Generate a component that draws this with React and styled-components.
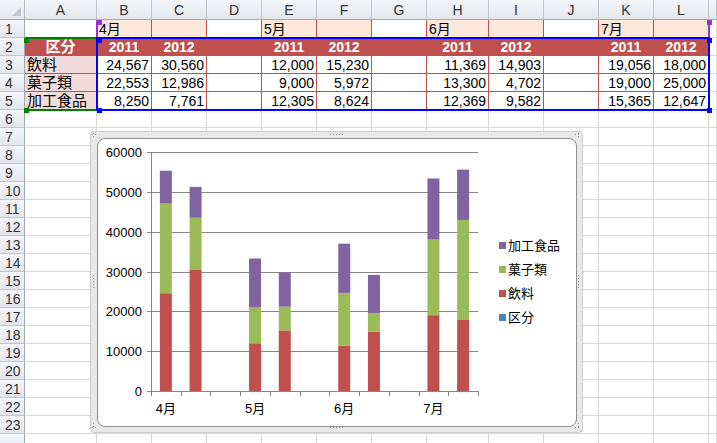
import React from "react";
import styled, { createGlobalStyle } from "styled-components";

const RED = "#c0504d";
const GREEN = "#9bbb59";
const PURPLE = "#8064a2";
const BLUE = "#4f81bd";
const GRID = "#d9d9d9";
const PEACH = "#fde9d9";
const PINK = "#f2dcdb";

const GlobalStyle = createGlobalStyle`
  html, body { margin: 0; padding: 0; background: #fff; overflow: hidden; }
  body { font-family: "Liberation Sans", "Noto Sans CJK JP", sans-serif; }
`;

// M is only a sliver at the right edge, so its letter is not shown
const colKeys = ["A", "B", "C", "D", "E", "F", "G", "H", "I", "J", "K", "L", "M"];
const gapCols = ["D", "G", "J"];
const rowCount = 24;

const values = {
  B1: "4月", E1: "5月", H1: "6月", K1: "7月",
  A2: "区分", B2: "2011", C2: "2012", E2: "2011", F2: "2012",
  H2: "2011", I2: "2012", K2: "2011", L2: "2012",
  A3: "飲料", B3: "24,567", C3: "30,560", E3: "12,000", F3: "15,230",
  H3: "11,369", I3: "14,903", K3: "19,056", L3: "18,000",
  A4: "菓子類", B4: "22,553", C4: "12,986", E4: "9,000", F4: "5,972",
  H4: "13,300", I4: "4,702", K4: "19,000", L4: "25,000",
  A5: "加工食品", B5: "8,250", C5: "7,761", E5: "12,305", F5: "8,624",
  H5: "12,369", I5: "9,582", K5: "15,365", L5: "12,647",
};

const categories = [
  { label: "4月", v: [24567, 22553, 8250] },
  { v: [30560, 12986, 7761] },
  null,
  { label: "5月", v: [12000, 9000, 12305] },
  { v: [15230, 5972, 8624] },
  null,
  { label: "6月", v: [11369, 13300, 12369] },
  { v: [14903, 4702, 9582] },
  null,
  { label: "7月", v: [19056, 19000, 15365] },
  { v: [18000, 25000, 12647] },
];

const legend = [
  { name: "加工食品", color: PURPLE },
  { name: "菓子類", color: GREEN },
  { name: "飲料", color: RED },
  { name: "区分", color: BLUE },
];

function cellKind(col, row) {
  const inTable = col !== "A" && col !== "M";
  if (row === 1 && inTable) return { fill: gapCols.includes(col) ? "#fff" : PEACH, line: true, align: "flex-start" };
  if (row === 2 && col !== "M") return { fill: RED, line: true, head: true, align: "center", size: col === "A" ? 15 : 14 };
  if (row >= 3 && row <= 5 && col === "A") return { fill: PINK, line: true, align: "flex-start", size: 15 };
  if (row >= 3 && row <= 5 && inTable) return { fill: "#fff", line: true, align: "flex-end" };
  return { fill: "#fff", align: "flex-start" };
}

export default function App() {
  const rows = Array.from({ length: rowCount }, (_, i) => i + 1);
  return (
    <>
      <GlobalStyle />
      <Sheet>
        <Corner>
          <CornerMark />
        </Corner>
        {colKeys.map((c) => (
          <ColHead key={c}>{c === "M" ? "" : c}</ColHead>
        ))}
        {rows.map((r) => (
          <React.Fragment key={r}>
            <RowHead>{r < rowCount ? r : ""}</RowHead>
            {colKeys.map((c) => {
              const k = cellKind(c, r);
              return (
                <Cell
                  key={c + r}
                  $fill={k.fill}
                  $line={k.line}
                  $head={k.head}
                  $align={k.align}
                  $size={k.size}
                >
                  {values[c + r]}
                </Cell>
              );
            })}
          </React.Fragment>
        ))}

        <SeriesRange />
        <LabelRange />
        <DataRange />

        <ChartFrame>
          <ChartArea>
            <Plot />
            <Legend>
              {legend.map((l) => (
                <LegendItem key={l.name}>
                  <Swatch $color={l.color} />
                  {l.name}
                </LegendItem>
              ))}
            </Legend>
          </ChartArea>
        </ChartFrame>
      </Sheet>
    </>
  );
}

function Plot() {
  const X0 = 53;
  const X1 = 380;
  const Y0 = 252;
  const YT = 13.3;
  const step = (X1 - X0) / 11;
  const sy = (v) => Y0 - (v * (Y0 - YT)) / 60000;
  const ticks = [0, 10000, 20000, 30000, 40000, 50000, 60000];
  const colors = [RED, GREEN, PURPLE];

  return (
    <PlotSvg width="395" height="287" viewBox="0 0 395 287">
      {ticks.map((t) => {
        const y = Math.round(sy(t)) + 0.5;
        return (
          <g key={t}>
            <line x1={X0 - 4} x2={X1} y1={y} y2={y} stroke="#868686" strokeWidth="1" />
            <text x={X0 - 9} y={y + 4.5} textAnchor="end" fontSize="13" fill="#000">
              {t}
            </text>
          </g>
        );
      })}
      <line x1={X0 + 0.5} x2={X0 + 0.5} y1={Math.round(YT)} y2={Y0 + 0.5} stroke="#868686" />
      {Array.from({ length: 12 }, (_, i) => {
        const x = Math.round(X0 + step * i) + 0.5;
        return <line key={i} x1={x} x2={x} y1={Y0} y2={Y0 + 5} stroke="#868686" />;
      })}
      {categories.map((cat, i) => {
        if (!cat) return null;
        const cx = X0 + step * i + step / 2;
        let acc = 0;
        return (
          <g key={i}>
            {cat.v.map((v, j) => {
              const yTop = sy(acc + v);
              const yBot = sy(acc);
              acc += v;
              return <rect key={j} x={cx - 6} y={yTop} width="12" height={yBot - yTop} fill={colors[j]} />;
            })}
            {cat.label && (
              <text x={cx} y={274} textAnchor="middle" fontSize="13" fill="#000">
                {cat.label}
              </text>
            )}
          </g>
        );
      })}
    </PlotSvg>
  );
}

const Sheet = styled.div`
  position: relative;
  display: grid;
  grid-template-columns: 25px 72px repeat(6, 55px) 62px repeat(4, 55px) 1fr;
  grid-template-rows: 20px;
  grid-auto-rows: 18px;
  width: 717px;
  height: 443px;
  overflow: hidden;
`;

const HeadBase = styled.div`
  box-sizing: border-box;
  background: linear-gradient(#f4f6f9, #e3e7ec);
  color: #333;
  font-size: 14px;
  display: flex;
  align-items: center;
  justify-content: center;
  line-height: 1;
`;

const Corner = styled(HeadBase)`
  border-right: 1px solid #b4bac3;
  border-bottom: 1px solid #9fa7b2;
  justify-content: flex-end;
  align-items: flex-end;
  padding: 0 3px 3px 0;
`;

const CornerMark = styled.span`
  width: 0;
  height: 0;
  border-left: 9px solid transparent;
  border-bottom: 9px solid #c3c9d1;
`;

const ColHead = styled(HeadBase)`
  border-right: 1px solid #c0c5cc;
  border-bottom: 1px solid #9fa7b2;
`;

const RowHead = styled(HeadBase)`
  border-right: 1px solid #9fa7b2;
  border-bottom: 1px solid #c0c5cc;
  justify-content: flex-start;
  padding-left: 5px;
`;

const Cell = styled.div`
  box-sizing: border-box;
  border-right: 1px solid ${(p) => (p.$line ? RED : GRID)};
  border-bottom: 1px solid ${(p) => (p.$line ? RED : GRID)};
  background: ${(p) => p.$fill};
  color: ${(p) => (p.$head ? "#fff" : "#000")};
  font-weight: ${(p) => (p.$head ? 700 : 400)};
  font-size: ${(p) => p.$size || 14}px;
  line-height: 1;
  display: flex;
  align-items: center;
  justify-content: ${(p) => p.$align};
  padding: 0 2px;
  white-space: nowrap;
  overflow: hidden;
`;

/* Excel's coloured highlight of the chart's source ranges, drawn over the cells */
const RangeBase = styled.div`
  position: absolute;
  box-sizing: border-box;
  pointer-events: none;
  &::before {
    content: "";
    position: absolute;
    width: 5px;
    height: 5px;
  }
`;

const DataRange = styled(RangeBase)`
  left: 96px;
  top: 37px;
  width: 614px;
  height: 74px;
  border: 2px solid #0000ff;
  &::before {
    left: -1px;
    top: -1px;
    background: #0000ff;
    box-shadow: 610px 0 0 #0000ff, 0 70px 0 #0000ff, 610px 70px 0 #0000ff;
  }
`;

const LabelRange = styled(RangeBase)`
  left: 25px;
  top: 37px;
  width: 72px;
  height: 74px;
  border-top: 2px solid #008000;
  border-bottom: 2px solid #008000;
  &::before {
    left: -1px;
    top: -1px;
    background: #008000;
    box-shadow: 0 70px 0 #008000;
  }
`;

const SeriesRange = styled(RangeBase)`
  left: 96px;
  top: 20px;
  width: 614px;
  height: 18px;
  border-left: 2px solid #9933cc;
  border-right: 2px solid #9933cc;
  &::before {
    left: -1px;
    top: 0;
    background: #9933cc;
    box-shadow: 610px 0 0 #9933cc;
  }
`;

/* floating chart object with its grey selection frame and dotted resize grips */
const dotsX = "repeating-linear-gradient(90deg, #8c8c8c 0 1px, transparent 1px 3px)";
const dotsY = "repeating-linear-gradient(180deg, #8c8c8c 0 1px, transparent 1px 3px)";

const ChartFrame = styled.div`
  position: absolute;
  left: 90px;
  top: 131px;
  width: 493px;
  height: 302px;
  box-sizing: border-box;
  padding: 6px 5px 5px 6px;
  border: 1px solid #cdcdcd;
  border-radius: 4px;
  background:
    ${dotsX} 239px 2px / 14px 1px no-repeat,
    ${dotsX} 239px 295px / 14px 1px no-repeat,
    ${dotsY} 2px 143px / 1px 14px no-repeat,
    ${dotsY} 487px 143px / 1px 14px no-repeat,
    ${dotsX} 1px 2px / 5px 1px no-repeat,
    ${dotsX} 484px 2px / 5px 1px no-repeat,
    ${dotsX} 1px 295px / 5px 1px no-repeat,
    ${dotsX} 484px 295px / 5px 1px no-repeat,
    ${dotsY} 2px 1px / 1px 5px no-repeat,
    ${dotsY} 487px 1px / 1px 5px no-repeat,
    ${dotsY} 2px 291px / 1px 5px no-repeat,
    ${dotsY} 487px 291px / 1px 5px no-repeat,
    #e8e8e8;
`;

const ChartArea = styled.div`
  box-sizing: border-box;
  height: 100%;
  background: #fff;
  border: 1px solid #8e8e8e;
  border-radius: 8px;
  display: flex;
  overflow: hidden;
`;

const PlotSvg = styled.svg`
  display: block;
  flex: none;
  font-family: "Liberation Sans", "Noto Sans CJK JP", sans-serif;
`;

const Legend = styled.ul`
  list-style: none;
  margin: 0;
  padding: 94px 0 0 6px;
  display: flex;
  flex-direction: column;
`;

const LegendItem = styled.li`
  height: 24px;
  display: flex;
  align-items: center;
  gap: 2px;
  font-size: 13px;
  line-height: 1;
  color: #000;
  white-space: nowrap;
`;

const Swatch = styled.span`
  width: 7px;
  height: 7px;
  background: ${(p) => p.$color};
`;
